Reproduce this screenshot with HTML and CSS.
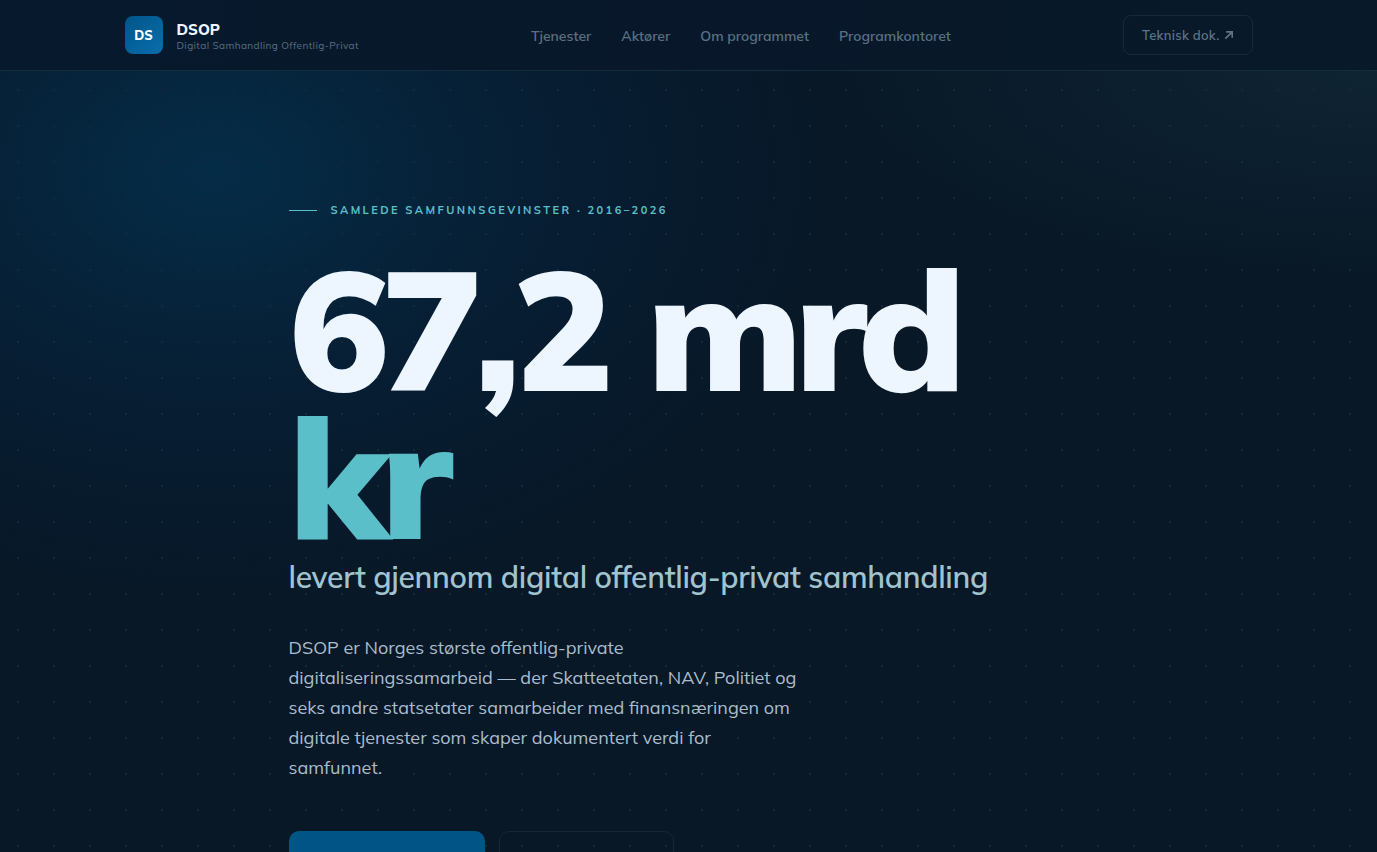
FILE: index.html
```html
<!DOCTYPE html>
<html lang="no">
<head>
    <meta charset="UTF-8">
    <meta name="viewport" content="width=device-width, initial-scale=1">
    <title>DSOP – Digital Samhandling Offentlig-Privat</title>
    <link rel="stylesheet" href="styles.css">
</head>
<body>
    <header class="topbar">
        <div class="topbar-inner">
            <a href="#" class="brand">
                <span class="brand-mark">DS</span>
                <span class="brand-text">
                    <strong>DSOP</strong>
                    <small>Digital Samhandling Offentlig-Privat</small>
                </span>
            </a>
            <nav class="menu">
                <a href="#tjenester">Tjenester</a>
                <a href="#aktorer">Aktører</a>
                <a href="#programmet">Om programmet</a>
                <a href="#kontoret">Programkontoret</a>
            </nav>
            <a href="#dok" class="doc-link">Teknisk dok.
                <svg viewBox="0 0 10 10" aria-hidden="true"><path d="M1.3 8.7 8.2 1.8M2.2 1.8H8.2V7.8"/></svg>
            </a>
        </div>
    </header>

    <main class="hero">
        <div class="hero-inner">
            <p class="eyebrow">Samlede samfunnsgevinster · 2016–2026</p>
            <h1>67,2 mrd <span class="unit">kr</span></h1>
            <p class="tagline">levert gjennom digital offentlig-privat samhandling</p>
            <p class="intro">DSOP er Norges største offentlig-private digitaliseringssamarbeid — der Skatteetaten, NAV, Politiet og seks andre statsetater samarbeider med finansnæringen om digitale tjenester som skaper dokumentert verdi for samfunnet.</p>
            <div class="actions">
                <a href="#tjenester" class="btn btn-primary" aria-label="Tjenester"></a>
                <a href="#programmet" class="btn btn-ghost" aria-label="Om programmet"></a>
            </div>
        </div>
    </main>
</body>
</html>
```
FILE: styles.css
```css
* {
    box-sizing: border-box;
    margin: 0;
    padding: 0;
}

html {
    background: #081827;
}

body {
    height: 100vh;
    overflow: hidden;
    display: flex;
    flex-direction: column;
    color: #edf6ff;
    font-family: Mulish, "Open Sans", sans-serif;
}

a {
    color: inherit;
    text-decoration: none;
}

/* top bar */
.topbar {
    flex: none;
    background: linear-gradient(90deg, #07192d, #08182a 50%, #081929);
    border-bottom: 1px solid #142d3d;
}

.topbar-inner {
    max-width: 1200px;
    height: 70px;
    margin: 0 auto;
    padding: 0 36px;
    display: flex;
    align-items: center;
    justify-content: space-between;
}

.brand {
    display: flex;
    align-items: center;
    gap: 14px;
}

.brand-mark {
    width: 38px;
    height: 38px;
    border-radius: 8px;
    background: linear-gradient(135deg, #005587, #0a6eae);
    display: flex;
    align-items: center;
    justify-content: center;
    font-size: 13px;
    font-weight: 800;
    color: #fff;
}

.brand-text {
    padding-top: 2px;
}

.brand-text strong {
    display: block;
    font-size: 15px;
    line-height: 18px;
    font-weight: 800;
}

.brand-text small {
    display: block;
    font-size: 10px;
    line-height: 13px;
    letter-spacing: 0.04em;
    color: #5b7084;
}

.menu {
    display: flex;
    gap: 30px;
    padding-top: 2px;
    font-size: 14px;
    font-weight: 600;
    color: #5b7084;
}

.doc-link {
    height: 40px;
    padding: 0 18px;
    border: 1px solid #142a3b;
    border-radius: 8px;
    display: flex;
    align-items: center;
    gap: 4px;
    font-size: 13px;
    font-weight: 600;
    letter-spacing: 0.02em;
    color: #5f7488;
}

.doc-link svg {
    width: 10px;
    height: 10px;
    fill: none;
    stroke: currentColor;
    stroke-width: 1.7;
}

/* hero */
.hero {
    flex: 1;
    min-height: 0;
    padding: 128px 32px 0;
    background:
        radial-gradient(circle, #14293a 1px, transparent 1px) 0 1px / 36px 36px,
        radial-gradient(ellipse 620px 430px at 215px 100px, #052c47, rgba(6, 31, 54, 0.75) 55%, rgba(8, 24, 39, 0)),
        radial-gradient(ellipse 550px 210px at 100% 0, #0f2433, rgba(8, 24, 39, 0)),
        #081827;
}

.hero-inner {
    max-width: 800px;
    margin: 0 auto;
}

.eyebrow {
    display: flex;
    align-items: center;
    gap: 14px;
    font-size: 11px;
    line-height: 22px;
    font-weight: 700;
    letter-spacing: 0.22em;
    text-transform: uppercase;
    color: #5bbfc9;
}

.eyebrow::before {
    content: "";
    width: 28px;
    height: 1px;
    background: #5bbfc9;
}

h1 {
    margin-top: 33px;
    font-size: 168px;
    line-height: 148px;
    font-weight: 900;
    letter-spacing: -0.045em;
}

.unit {
    color: #5bbfc9;
}

.tagline {
    margin-top: 7px;
    font-size: 30px;
    line-height: 40px;
    font-weight: 600;
    letter-spacing: -0.01em;
    color: #a0c3ce;
}

.intro {
    max-width: 516px;
    margin-top: 36px;
    font-size: 18px;
    line-height: 30px;
    color: #aabdcd;
}

.actions {
    margin-top: 48px;
    display: flex;
    gap: 14px;
}

.btn {
    height: 52px;
    border-radius: 10px;
}

.btn-primary {
    width: 196px;
    background: #005587;
}

.btn-ghost {
    width: 175px;
    border: 1px solid #142838;
}
```
